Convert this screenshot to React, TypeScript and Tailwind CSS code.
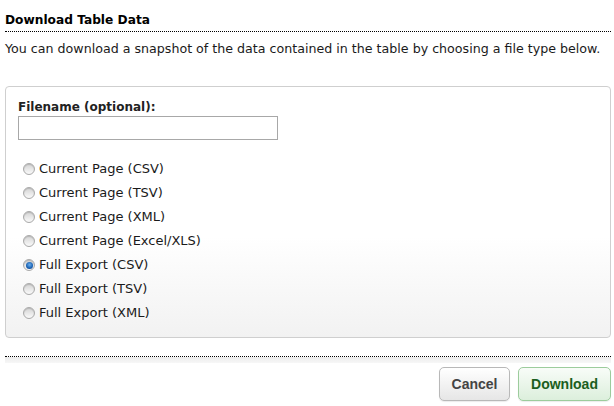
import React from "react";

const OPTIONS = [
  "Current Page (CSV)",
  "Current Page (TSV)",
  "Current Page (XML)",
  "Current Page (Excel/XLS)",
  "Full Export (CSV)",
  "Full Export (TSV)",
  "Full Export (XML)",
];

function Radio({ checked }: { checked: boolean }) {
  return (
    <span className="relative inline-flex h-[12px] w-[12px] shrink-0 items-center justify-center rounded-full border border-[#a9a9a9] bg-gradient-to-b from-[#d4d4d4] to-[#fafafa] shadow-[inset_0_1px_1px_rgba(0,0,0,0.15)]">
      {checked && (
        <span className="h-[7px] w-[7px] rounded-full bg-[radial-gradient(circle_at_50%_40%,#6ab0f0_0%,#1a60b0_60%,#0a3a80_100%)]" />
      )}
    </span>
  );
}

export default function App() {
  return (
    <div className="min-h-screen w-[614px] bg-white font-['DejaVu_Sans',Verdana,sans-serif] text-[13px] text-[#1a1a1a]">
      <div className="pl-[5px] pr-[3px] pt-[11px]">
        <h1 className="text-[12.2px] font-bold leading-[18px] text-black">Download Table Data</h1>
        <div className="mt-[2px] border-t border-dotted border-black" />
        <p className="mt-[8px] whitespace-nowrap text-[12.65px] leading-[17px]">
          You can download a snapshot of the data contained in the table by choosing a file type below.
        </p>

        <div className="mt-[29px] rounded-[4px] border border-[#cfcfcf] bg-gradient-to-b from-white from-60% to-[#f2f2f2] px-[12px] pb-[12px] pt-[12px]">
          <label className="block text-[12px] font-bold leading-[16px] text-[#222]">Filename (optional):</label>
          <input
            type="text"
            className="mt-[1px] block h-[24px] w-[260px] border border-[#a8a8a8] bg-white px-1 outline-none"
          />
          <div className="mt-[17px] flex flex-col">
            {OPTIONS.map((o, i) => (
              <label key={o} className="flex h-[24px] items-center gap-[4px] pl-[5px] leading-[16px]">
                <Radio checked={i === 4} />
                <span>{o}</span>
              </label>
            ))}
          </div>
        </div>

        <div className="mt-[18px] border-t border-dotted border-black" />
        <div className="h-[6px] bg-gradient-to-b from-[#ececec] to-[#f7f7f7]" />

        <div className="mt-[4px] flex justify-end gap-[8px] font-['Liberation_Sans',Arial,sans-serif] text-[14px] font-bold">
          <button className="h-[34px] w-[71px] rounded-[5px] border border-[#b8b8b8] bg-gradient-to-b from-white to-[#e6e6e6] text-[#444] shadow-[0_1px_1px_rgba(0,0,0,0.08)]">
            Cancel
          </button>
          <button className="h-[34px] w-[93px] rounded-[5px] border border-[#9ccc9c] bg-gradient-to-b from-[#f8fcf8] to-[#dcefdc] text-[#1b5e20] shadow-[0_1px_1px_rgba(0,0,0,0.08)]">
            Download
          </button>
        </div>
      </div>
    </div>
  );
}
